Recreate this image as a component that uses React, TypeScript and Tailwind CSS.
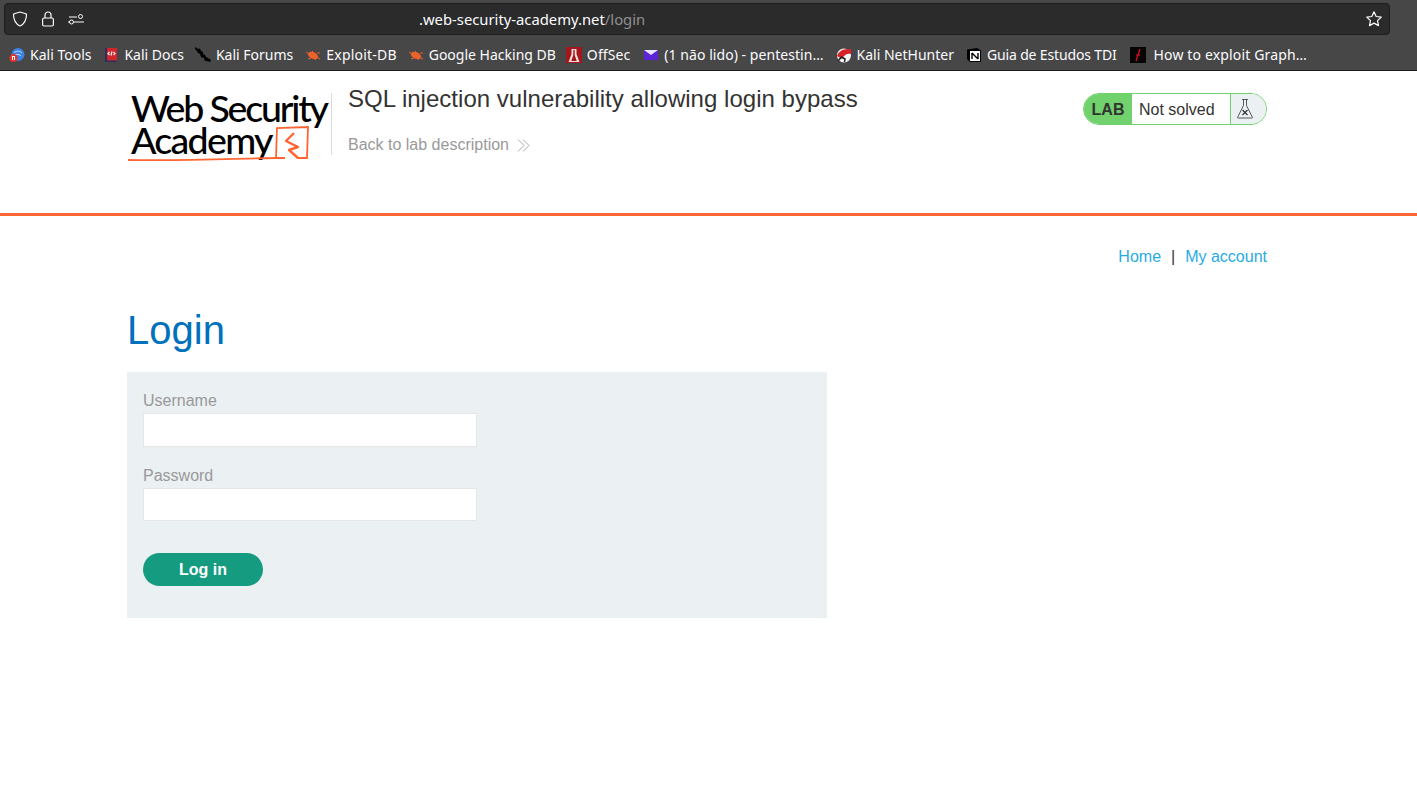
import React from "react";

const Ico = ({ children }: { children: React.ReactNode }) => (
  <svg width="16" height="16" viewBox="0 0 16 16" className="shrink-0">{children}</svg>
);

const marks: Record<string, React.ReactNode> = {
  kali: (
    <Ico>
      <circle cx="9" cy="7.500" r="6.500" fill="#3b82e6" />
      <path d="M5 5.500c3-2 6-1.500 8 .5M6 8c2-1 4-1 6 1" stroke="#cfe3fb" strokeWidth="1" fill="none" />
      <circle cx="4.500" cy="11" r="4" fill="#e2332e" />
      <path d="M3 9.500h3M3.500 9.500v3.500M5.500 9.500v3.500" stroke="#fff" strokeWidth="1" />
    </Ico>
  ),
  docs: (
    <Ico>
      <rect x="2" y="1" width="12" height="14" fill="#d1242b" />
      <rect x="2" y="1" width="2" height="14" fill="#27305f" />
      <rect x="2" y="13.500" width="12" height="1.500" fill="#27305f" />
      <path d="M6.500 5 5 6.500 6.500 8M10.500 5 12 6.500 10.500 8M9 4.500 8 8.500" stroke="#fff" strokeWidth="1.100" fill="none" />
    </Ico>
  ),
  forum: (
    <Ico>
      <path d="M0 0 3 2 5 1.500 6 4 8 5 8 7 10 8 11 10 13 11 16 13 15 15 12 14 10 14 9 11 6 10 5 7 3 6 2 4 0 2Z" fill="#000" />
    </Ico>
  ),
  bug: (
    <Ico>
      <ellipse cx="8" cy="8.500" rx="5.500" ry="3.200" transform="rotate(25 8 8.500)" fill="#e8622c" />
      <path d="M1 5l3 2M3 12l3-1M7 4l2 2M10 13l1-2M12 6l3 0M13 11l2 1" stroke="#e8622c" strokeWidth="1" />
    </Ico>
  ),
  off: (
    <Ico>
      <rect x="0" y="0" width="16" height="16" fill="#a3161b" />
      <path d="M5.500 2h5v5l3 8h-11l3-8Z" fill="#f3dcdc" />
      <path d="M7.300 3h1.400v5l2 6H5.300l2-6Z" fill="#a3161b" />
    </Ico>
  ),
  mail: (
    <Ico>
      <rect x="1" y="3" width="14" height="10" fill="#5b25d6" />
      <path d="M1 3h14L8 8Z" fill="#e9e4fb" />
    </Ico>
  ),
  hunter: (
    <Ico>
      <circle cx="8" cy="8.500" r="7" fill="#f4f4f4" />
      <path d="M1 9C3 4 8 1 15 2.500V7C11 6 8 8 6 12Z" fill="#d8222a" />
      <path d="M2 14 5.500 10 9 12 8.500 15" stroke="#222" strokeWidth="1.500" fill="none" />
    </Ico>
  ),
  notion: (
    <Ico>
      <path d="M1 2.500 11 1l4 2.500V15H4l-3-3Z" fill="#000" />
      <path d="M4 4h10v10H4Z" fill="#fff" />
      <path d="M6 6v6M6 6l6 6M12 6v6" stroke="#000" strokeWidth="1.400" fill="none" />
    </Ico>
  ),
  graph: (
    <Ico>
      <rect width="16" height="16" fill="#050505" />
      <path d="M10 2 6 14M6 8h4" stroke="#e3131b" strokeWidth="1.200" />
    </Ico>
  ),
};

const bookmarks: { m: string; t: string; cls: string; tx: string }[] = [
  { m: "kali", t: "Kali Tools", cls: "mr-[12px]", tx: "" },
  { m: "docs", t: "Kali Docs", cls: "mr-[11px]", tx: "" },
  { m: "forum", t: "Kali Forums", cls: "mr-[12px]", tx: "" },
  { m: "bug", t: "Exploit-DB", cls: "mr-[11px]", tx: "tracking-[.2px]" },
  { m: "bug", t: "Google Hacking DB", cls: "mr-[10px]", tx: "" },
  { m: "off", t: "OffSec", cls: "mr-[13px]", tx: "tracking-[.1px]" },
  { m: "mail", t: "(1 não lido) - pentestin…", cls: "mr-[12px]", tx: "tracking-[.05px]" },
  { m: "hunter", t: "Kali NetHunter", cls: "mr-[12px]", tx: "" },
  { m: "notion", t: "Guia de Estudos TDI", cls: "mr-[13px]", tx: "tracking-[-.15px]" },
  { m: "graph", t: "How to exploit Graph…", cls: "", tx: "ml-[3px] tracking-[.15px]" },
];

export default function App() {
  return (
    <div className="min-h-[798px] bg-white font-['Liberation_Sans',sans-serif] text-[16px] text-[#333332]">
      {/* browser chrome */}
      <div className="h-[71px] bg-[#474747] border-b border-[#1c1c1c] font-['Noto_Sans',sans-serif] pt-[3px]">
        <div className="ml-[4px] w-[1386px] h-[32px] rounded-[4px] bg-[#2b2b2b] border border-[#1d1d1d] flex items-center pl-[7px] pr-[6px] text-[#fbfbfe]">
          <svg width="16" height="16" viewBox="0 0 16 16" fill="none" stroke="currentColor" strokeWidth="1.200" className="shrink-0">
            <path d="M8 1 14.500 3c0 6-1.500 9.700-6.500 12C3 12.700 1.500 9 1.500 3Z" strokeLinejoin="round" />
          </svg>
          <svg width="16" height="16" viewBox="0 0 16 16" fill="none" stroke="currentColor" strokeWidth="1.200" className="shrink-0 ml-[12px]">
            <rect x="2.600" y="7" width="10.800" height="8" rx="1.500" />
            <path d="M5 7V4a3 3 0 0 1 6 0v3" />
          </svg>
          <svg width="16" height="16" viewBox="0 0 16 16" fill="none" stroke="currentColor" strokeWidth="1" className="shrink-0 ml-[12px]">
            <path d="M1 6h8M1.500 11H0M6 11h10" />
            <circle cx="12.500" cy="5.500" r="2" />
            <circle cx="3.500" cy="11" r="2" />
          </svg>
          <div className="ml-[335px] text-[14.800px] leading-none">
            .web-security-academy.net<span className="text-[#8f8f92]">/login</span>
          </div>
          <svg width="18" height="18" viewBox="0 0 24 24" fill="none" stroke="currentColor" strokeWidth="1.600" strokeLinejoin="round" className="ml-auto">
            <path d="M12 2.500l2.900 6.200 6.800.8-5 4.600 1.300 6.700-6-3.300-6 3.300 1.300-6.700-5-4.600 6.800-.8Z" />
          </svg>
        </div>
        <div className="mt-[4px] pl-[9px] h-[31px] flex items-center text-[14px] text-[#fbfbfe] whitespace-nowrap">
          {bookmarks.map((b) => (
            <div key={b.t} className={`flex items-center gap-[5px] ${b.cls}`}>
              {marks[b.m]}
              <span className={b.tx}>{b.t}</span>
            </div>
          ))}
        </div>
      </div>

      {/* lab header */}
      <header className="h-[145px] border-b-[3px] border-[#ff6633]">
        <div className="w-[1140px] ml-[127px] flex items-start">
          <div className="w-[205px] h-[62px] mt-[22px] border-r border-[#dcdcdc] relative shrink-0">
            <div className="font-['Lato',sans-serif] font-medium text-[#000] text-[37.500px] leading-[32px] ml-[4px] -mt-[1px] whitespace-nowrap">
              <div className="tracking-[-2.200px]">Web Security</div>
              <div className="tracking-[-1.700px]">Academy</div>
            </div>
            <svg width="182" height="36" viewBox="0 0 182 36" fill="none" className="absolute left-[1px] top-[33px]">
              <path d="M0 34C40 35 90 33 148 32" stroke="#ff6633" strokeWidth="1.800" />
              <path d="M148 32 149 2 180 1 179 32 169 32M148 32H157" stroke="#ff6633" strokeWidth="1.800" />
              <path d="M166 7 158 15 170 21 161 24 170 32" stroke="#ff6633" strokeWidth="2.400" strokeLinejoin="round" />
            </svg>
          </div>
          <div className="ml-[16px] pt-[12px]">
            <h2 className="text-[24px] tracking-[.02px] leading-[32px] text-[#333332] whitespace-nowrap">SQL injection vulnerability allowing login bypass</h2>
            <div className="mt-[21px] flex items-center text-[#999] leading-[18px]">
              Back to lab description
              <svg width="13" height="13" viewBox="0 0 13 13" fill="none" stroke="#aaa" strokeWidth="1" className="ml-[8px]">
                <path d="M1 .5 7 6.500 1 12.500M6 .5 12 6.500 6 12.500" />
              </svg>
            </div>
          </div>
          <div className="ml-auto mt-[22px] w-[184px] h-[32px] flex rounded-[16px] border border-[#70d16d] overflow-hidden">
            <div className="w-[48px] bg-[#70d16d] font-bold text-[#333332] flex items-center justify-center pt-[2px]">LAB</div>
            <div className="w-[99px] bg-white flex items-center pl-[7px] pt-[1px] border-r border-[#70d16d]">Not solved</div>
            <div className="flex-1 bg-[#ebf0f2] flex items-center justify-center pr-[7px]">
              <svg width="18" height="22" viewBox="0 0 18 22" fill="none" stroke="#333" strokeWidth=".8">
                <path d="M6 1.500h6M7.500 1.500v6L1.500 19.500a.5.5 0 0 0 .5.5h14a.5.5 0 0 0 .5-.5L10.500 7.500v-6" />
                <path d="M6.500 12l5 5M11.500 12l-5 5" strokeWidth="1.200" />
              </svg>
            </div>
          </div>
        </div>
      </header>

      {/* page */}
      <main className="w-[1140px] ml-[127px]">
        <nav className="pt-[32px] flex justify-end items-center leading-[18px] text-[#29abe2]">
          <span>Home</span>
          <span className="mx-[10px] text-[#333332]">|</span>
          <span>My account</span>
        </nav>
        <h1 className="mt-[41px] text-[40px] leading-[46px] text-[#0071bc]">Login</h1>
        <form className="mt-[19px] w-[700px] h-[246px] bg-[#ebf0f2] pt-[20px] px-[16px] flex flex-col items-start text-[#999]">
          <label className="leading-[18px] h-[21px]">Username</label>
          <div className="w-[334px] h-[34px] bg-white border border-[#e6e6e6]" />
          <label className="mt-[20px] leading-[18px] h-[21px]">Password</label>
          <div className="w-[334px] h-[33px] bg-white border border-[#e6e6e6]" />
          <button type="button" className="mt-[32px] w-[120px] h-[33px] rounded-[25px] bg-[#159b7f] text-white font-bold">Log in</button>
        </form>
      </main>
    </div>
  );
}
